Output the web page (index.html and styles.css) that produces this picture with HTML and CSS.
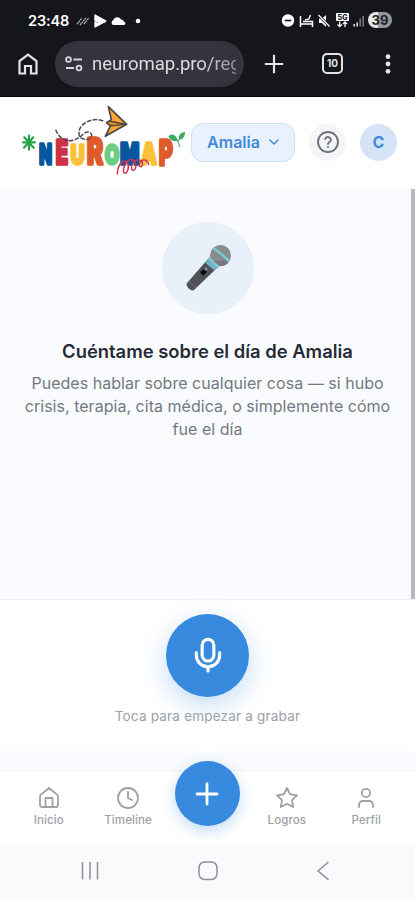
FILE: index.html
```html
<!DOCTYPE html>
<html lang="es">
<head>
<meta charset="utf-8">
<meta name="viewport" content="width=device-width, initial-scale=1">
<title>Neuromap</title>
<link rel="stylesheet" href="styles.css">
</head>
<body>
<div class="phone">
  <div class="browser">
    <div class="status">
      <span class="time">23:48</span>
      <svg class="status-left" width="68" height="18" viewBox="0 0 68 18" fill="#fff">
        <path d="M1 12l5-6M4 13l6-7M8 12l5-6" stroke="#bbb" stroke-width="1.2" stroke-dasharray="2 .5" fill="none"/>
        <path d="M19 3l11 6-2 1.500-3-1.500-2 1.500-4-2zM19 10l3 2 3-2 1.500 1-7.500 4z" stroke="#fff" stroke-width="1.300" stroke-linejoin="round"/>
        <path d="M37 13a2.800 2.800 0 0 1 .3-5 4.300 4.300 0 0 1 7.700-.5 3 3 0 0 1 3 2.200c2 .5 2 3.300-.5 3.300z"/>
        <circle cx="62" cy="9" r="2.300"/>
      </svg>
      <svg class="status-right" width="85" height="20" viewBox="0 0 85 20" fill="#fff">
        <circle cx="7" cy="9.500" r="6.200"/><path d="M3.800 9.500h6.400" stroke="#15161b" stroke-width="1.700"/>
        <path d="M19.500 5v11M19.500 13h12M31.500 16v-5.500H22" stroke="#fff" stroke-width="1.500" fill="none"/><path d="M24 9l4-1 1.500-4" stroke="#fff" stroke-width="1.300" fill="none"/>
        <path d="M38 7.500h3l4-3.500v12l-4-4h-3z"/><path d="M37.500 4l11 11.500" stroke="#15161b" stroke-width="2.600"/><path d="M37.500 4l11 11.500" stroke="#fff" stroke-width="1.200"/>
        <rect x="55" y="2" width="13" height="8" rx="1"/><text x="61.500" y="8.800" class="five-g">5G</text>
        <path d="M58.700 10.500v5M56.500 13.500l2.200 2 2.200-2M64 16v-5M62 13l2-2 2 2" stroke="#fff" stroke-width="1.300" fill="none"/>
        <path d="M73.200 15.500V13M76.200 15.500v-4" stroke="#ddd" stroke-width="1.600"/><path d="M79.200 15.500v-8M82.200 15.500V5" stroke="#777" stroke-width="1.600"/>
      </svg>
      <span class="battery">39</span>
    </div>
    <div class="toolbar">
      <svg class="home" width="20" height="22" viewBox="0 0 20 22" fill="none" stroke="#e4e3e8" stroke-width="2.200"><path d="M1.500 20.500V8L10 1.700 18.500 8v12.500H13V13H7v7.500z"/></svg>
      <div class="address">
        <svg width="18" height="16" viewBox="0 0 18 16" fill="none" stroke="#d8d7dd" stroke-width="1.800"><circle cx="3.500" cy="3.500" r="2.400"/><path d="M8.500 3.500H17M1 12h8"/><circle cx="14" cy="12" r="2.400"/></svg>
        <span class="url">neuromap.pro/reg</span>
      </div>
      <svg class="new-tab" width="20" height="20" viewBox="0 0 20 20" stroke="#e4e3e8" stroke-width="2.200"><path d="M10 .8v18.400M.8 10h18.400"/></svg>
      <span class="tabs">10</span>
      <svg class="dots" width="6" height="20" viewBox="0 0 6 20" fill="#e4e3e8"><circle cx="3" cy="2.700" r="2.400"/><circle cx="3" cy="10" r="2.400"/><circle cx="3" cy="17.300" r="2.400"/></svg>
    </div>
  </div>

  <header class="header">
    <svg class="logo" width="180" height="92" viewBox="0 0 540 276">
      <path d="M57 116v42M39 136h36M43 121l28 31M70 121l-28 31" fill="none" stroke-linecap="round" stroke="#25a44a" stroke-width="6.500"/>
      <g class="letters">
        <text x="88" y="202" textLength="38" lengthAdjust="spacingAndGlyphs" font-size="80" fill="#07579f" stroke="#07579f">N</text>
        <text x="137" y="202" textLength="37" lengthAdjust="spacingAndGlyphs" font-size="97" fill="#ce3048" stroke="#ce3048">E</text>
        <text x="182" y="202" textLength="41" lengthAdjust="spacingAndGlyphs" font-size="79" fill="#fcc039" stroke="#fcc039">U</text>
        <text x="231" y="202" textLength="48" lengthAdjust="spacingAndGlyphs" font-size="105" fill="#df5b29" stroke="#df5b29">R</text>
        <text x="285" y="201" textLength="42" lengthAdjust="spacingAndGlyphs" font-size="77" fill="#6bce85" stroke="#6bce85">O</text>
        <text x="331" y="202" textLength="57" lengthAdjust="spacingAndGlyphs" font-size="86" fill="#07579f" stroke="#07579f">M</text>
        <text x="394" y="202" textLength="46" lengthAdjust="spacingAndGlyphs" font-size="86" fill="#fcc039" stroke="#fcc039">A</text>
        <text x="447" y="203" textLength="41" lengthAdjust="spacingAndGlyphs" font-size="101" fill="#df5b29" stroke="#df5b29">P</text>
      </g>
      <path d="M137 98c8 20 21 32 41 33 20 0 32-11 46-23 8-6 21-3 21 7 0 16-31 17-37 1-6-24 14-42 39-47 14-3 27 0 35 4" fill="none" stroke="#4a4a50" stroke-width="4.500" stroke-dasharray="14 4"/>
      <path d="M295 29l55 53-64 36 16-33-12-8 14-9z" fill="#f7a637" stroke="#4b4644" stroke-width="5" stroke-linejoin="round"/>
      <path d="M290 77c4-5 14-4 23-2l35 7-38 4c-9 1-16-3-20-9z" fill="#e58b29" stroke="#4b4644" stroke-width="4" stroke-linejoin="round"/>
      <path d="M322 231c0-19 8-35 19-38 10-2 15 8 14 18-1 13-8 20-12 17-7-5 2-37 17-40 12-2 20 13 17 24-3 10-11 10-12 3-2-12 8-27 19-27 10 0 16 10 13 17-2 6-9 5-9-1 0-10 8-16 16-15 7 0 10 6 12 14" fill="none" stroke="#cf3450" stroke-width="4.500" stroke-linecap="round"/>
      <path d="M475 118c9-10 22-8 29 14-15 2-24-1-29-14zM507 128c-2-13 4-22 18-23 0 13-5 22-18 23z" fill="#3bac61"/>
      <path d="M494 125l10 7 6 18M504 132l8-12" fill="none" stroke="#3bac61" stroke-width="3"/>
    </svg>
    <button class="child">Amalia<svg width="10" height="6" viewBox="0 0 10 6" fill="none" stroke="#428bd9" stroke-width="1.500" stroke-linecap="round" stroke-linejoin="round"><path d="M1 1l4 4 4-4"/></svg></button>
    <button class="round help"><svg width="24" height="24" viewBox="0 0 24 24" fill="none" stroke="#6d727b" stroke-width="1.900" stroke-linecap="round" stroke-linejoin="round"><circle cx="12" cy="12" r="10"/><path d="M9.100 9a3 3 0 0 1 5.800 1c0 2-2.900 2.500-2.900 4M12 17h.01"/></svg></button>
    <button class="round avatar">C</button>
  </header>

  <main class="content">
    <div class="intro">
      <div class="mic-circle">
        <svg width="48" height="48" viewBox="0 0 48 48">
          <path d="M3 39L24 15l9 9L10 46c-3 2-9-4-7-7z" fill="#505257"/>
          <path d="M5 37l7 7" stroke="#6d6f75" stroke-width="1"/>
          <path d="M25.500 12.500l10.500 10-6 3.500-8.500-7z" fill="#71b6c5"/>
          <circle cx="36.500" cy="11.500" r="10.500" fill="#898b8f"/>
          <path d="M28 17.500a10.500 10.500 0 0 0 16 1.500l-4-3z" fill="#75777c"/>
          <path d="M29 4c5 3 11 8 16 13" stroke="#78cbd3" stroke-width="2.500" fill="none"/>
          <path d="M25.500 14c3 4 5 6 9 8.500" stroke="#8ed0d9" stroke-width="2" fill="none"/>
          <path d="M16 28l4-3 3 3-4 4z" fill="#08090b"/><circle cx="22" cy="25" r="1.500" fill="#93969b"/>
        </svg>
      </div>
      <h1>Cuéntame sobre el día de Amalia</h1>
      <p>Puedes hablar sobre cualquier cosa — si hubo<br>crisis, terapia, cita médica, o simplemente cómo<br>fue el día</p>
    </div>
    <div class="scrollbar"></div>
  </main>

  <section class="recorder">
    <button class="record"><svg width="40" height="40" viewBox="0 0 24 24" fill="none" stroke="#fff" stroke-width="1.900" stroke-linecap="round" stroke-linejoin="round"><rect x="8.500" y="2" width="7" height="13" rx="3.500"/><path d="M5 10v1.500a7 7 0 0 0 14 0V10M12 18.500v2.500"/></svg></button>
    <span>Toca para empezar a grabar</span>
  </section>

  <nav class="nav">
    <a class="tab"><svg width="24" height="24" viewBox="0 0 24 24"><path d="M3 10.500c0-.8.3-1.400.9-1.900L12 2l8.100 6.600c.6.500.9 1.100.9 1.900V19a2 2 0 0 1-2 2H5a2 2 0 0 1-2-2zM8.500 21v-9h7v9"/></svg>Inicio</a>
    <a class="tab"><svg width="24" height="24" viewBox="0 0 24 24"><circle cx="12" cy="12" r="10"/><path d="M12 6v6l4 2"/></svg>Timeline</a>
    <div class="center"><button class="add"><svg width="24" height="24" viewBox="0 0 24 24" stroke="#fff" stroke-width="2.800" stroke-linecap="round"><path d="M12 2v20M2 12h20"/></svg></button></div>
    <a class="tab"><svg width="24" height="24" viewBox="0 0 24 24"><path d="M12 2l3.090 6.260L22 9.270l-5 4.870 1.180 6.880L12 17.770l-6.180 3.250L7 14.140 2 9.270l6.910-1.010z"/></svg>Logros</a>
    <a class="tab"><svg width="24" height="24" viewBox="0 0 24 24"><circle cx="12" cy="7" r="4.200"/><path d="M5 21v-2a4 4 0 0 1 4-4h6a4 4 0 0 1 4 4v2"/></svg>Perfil</a>
  </nav>
  <div class="system">
    <svg width="18" height="20" viewBox="0 0 18 20"><path d="M1.500 1v17.500M9 1v17.500M16.500 1v17.500"/></svg>
    <svg width="20" height="20" viewBox="0 0 20 20"><rect x="1" y="1" width="18" height="17.500" rx="5.500"/></svg>
    <svg width="14" height="20" viewBox="0 0 14 20"><path d="M12.500 1L2 10l10.500 8.700"/></svg>
  </div>
</div>
</body>
</html>
```
FILE: styles.css
```css
* { box-sizing: border-box; }
body { margin: 0; font-family: Inter, "Liberation Sans", sans-serif; background: #f9fbfe; }
button { border: 0; padding: 0; font: inherit; display: flex; align-items: center; justify-content: center; }
svg { display: block; flex: none; }
.phone { width: 415px; height: 900px; overflow: hidden; display: flex; flex-direction: column; }
.browser { height: 97px; background: #15161b; flex: none; border-bottom: 1px solid #08090c; }
.status { height: 40px; display: flex; align-items: center; padding: 0 23px 0 28px; color: #fff; }
.time { width: 41px; font-size: 14.500px; font-weight: 600; letter-spacing: -.15px; white-space: nowrap; }
.status-left { margin-left: 7px; margin-top: 2px; }
.status-right { margin-left: auto; margin-top: 2px; }
.five-g { font-size: 7px; font-weight: 800; fill: #15161b; text-anchor: middle; }
.battery { width: 24px; height: 16px; border-radius: 8px; margin-left: 2px; background: linear-gradient(90deg, #e7e7e9 42%, #96979b 42%); color: #202126; font-size: 13px; font-weight: 700; line-height: 16px; text-align: center; }
.toolbar { display: flex; align-items: center; height: 47px; padding-left: 18px; }
.address { width: 189px; height: 46px; margin-left: 17px; padding: 0 7px 0 10px; border-radius: 23px; background: #34353c; display: flex; align-items: center; gap: 9px; }
.url { width: 144px; flex: none; overflow: hidden; white-space: nowrap; font-family: Roboto, sans-serif; font-size: 18.600px; letter-spacing: -.1px; line-height: 28px; color: #dcdbe0; -webkit-mask-image: linear-gradient(90deg, #000 75%, rgba(0,0,0,.5)); }
.new-tab { margin-left: 20px; }
.tabs { width: 21px; height: 21px; margin-left: 38px; border: 2px solid #e4e3e8; border-radius: 5px; color: #e4e3e8; font-size: 10px; font-weight: 700; line-height: 17px; text-align: center; }
.dots { margin-left: 42px; }
.header { height: 92px; flex: none; background: #fff; display: flex; align-items: center; padding-left: 10px; }
.letters text { font-family: Inter, sans-serif; font-weight: 800; stroke-width: 11px; stroke-linejoin: round; }
.child { width: 104px; height: 39px; margin: -2px 0 0 1px; background: #e8f1fc; border: 1px solid #cee0f4; border-radius: 12px; color: #428bd9; font-size: 16px; font-weight: 600; gap: 9px; }
.round { width: 37px; height: 37px; border-radius: 50%; margin-top: -2px; }
.help { margin-left: 14px; background: #f4f5f7; }
.avatar { margin-left: 14px; background: #d4e4f6; color: #428bd9; font-size: 16px; font-weight: 700; }
.content { height: 410px; flex: none; display: flex; background: #f9fbfe; }
.intro { flex: 1; min-width: 0; padding: 33px 0 0 4px; display: flex; flex-direction: column; align-items: center; text-align: center; }
.mic-circle { width: 92px; height: 92px; border-radius: 50%; background: #e8f0f9; display: flex; align-items: center; justify-content: center; }
h1 { margin: 24px 0 0; color: #272b37; font-size: 18.400px; line-height: 26px; font-weight: 600; }
p { margin: 8px 0 0; color: #747981; font-size: 16px; line-height: 23px; letter-spacing: .03px; white-space: nowrap; }
.scrollbar { width: 4px; background: #b8b9bb; }
.recorder { height: 152px; flex: none; background: #fff; border-top: 1px solid #edf0f4; display: flex; flex-direction: column; align-items: center; padding-top: 14px; }
.record { width: 83px; height: 83px; border-radius: 50%; background: #378ade; box-shadow: 0 8px 26px rgba(55,138,222,.3); }
.recorder span { margin-top: 9px; color: #9ba0a8; font-size: 13.500px; line-height: 20px; letter-spacing: .2px; position: relative; }
.nav { height: 74px; flex: none; margin-top: 19px; background: #fff; border-top: 1px solid #f0f2f5; display: grid; grid-template-columns: repeat(5, 79.400px); padding-left: 9px; }
.tab { display: flex; flex-direction: column; align-items: center; padding-top: 15px; color: #9da1a7; font-size: 11.500px; font-weight: 500; line-height: 15px; gap: 3px; letter-spacing: .1px; }
.tab svg { fill: none; stroke: #9da1a7; stroke-width: 1.800; stroke-linejoin: round; stroke-linecap: round; }
.center { display: flex; justify-content: center; }
.add { width: 65px; height: 65px; margin-top: -10px; flex: none; border-radius: 50%; background: #378ade; box-shadow: 0 5px 15px rgba(55,138,222,.3); }
.system { height: 56px; flex: none; display: flex; justify-content: space-between; align-items: center; padding: 0 85px 2px 81px; background: #f9fafc; }
.system svg { fill: none; stroke: #8d8f93; stroke-width: 1.500; }
```
